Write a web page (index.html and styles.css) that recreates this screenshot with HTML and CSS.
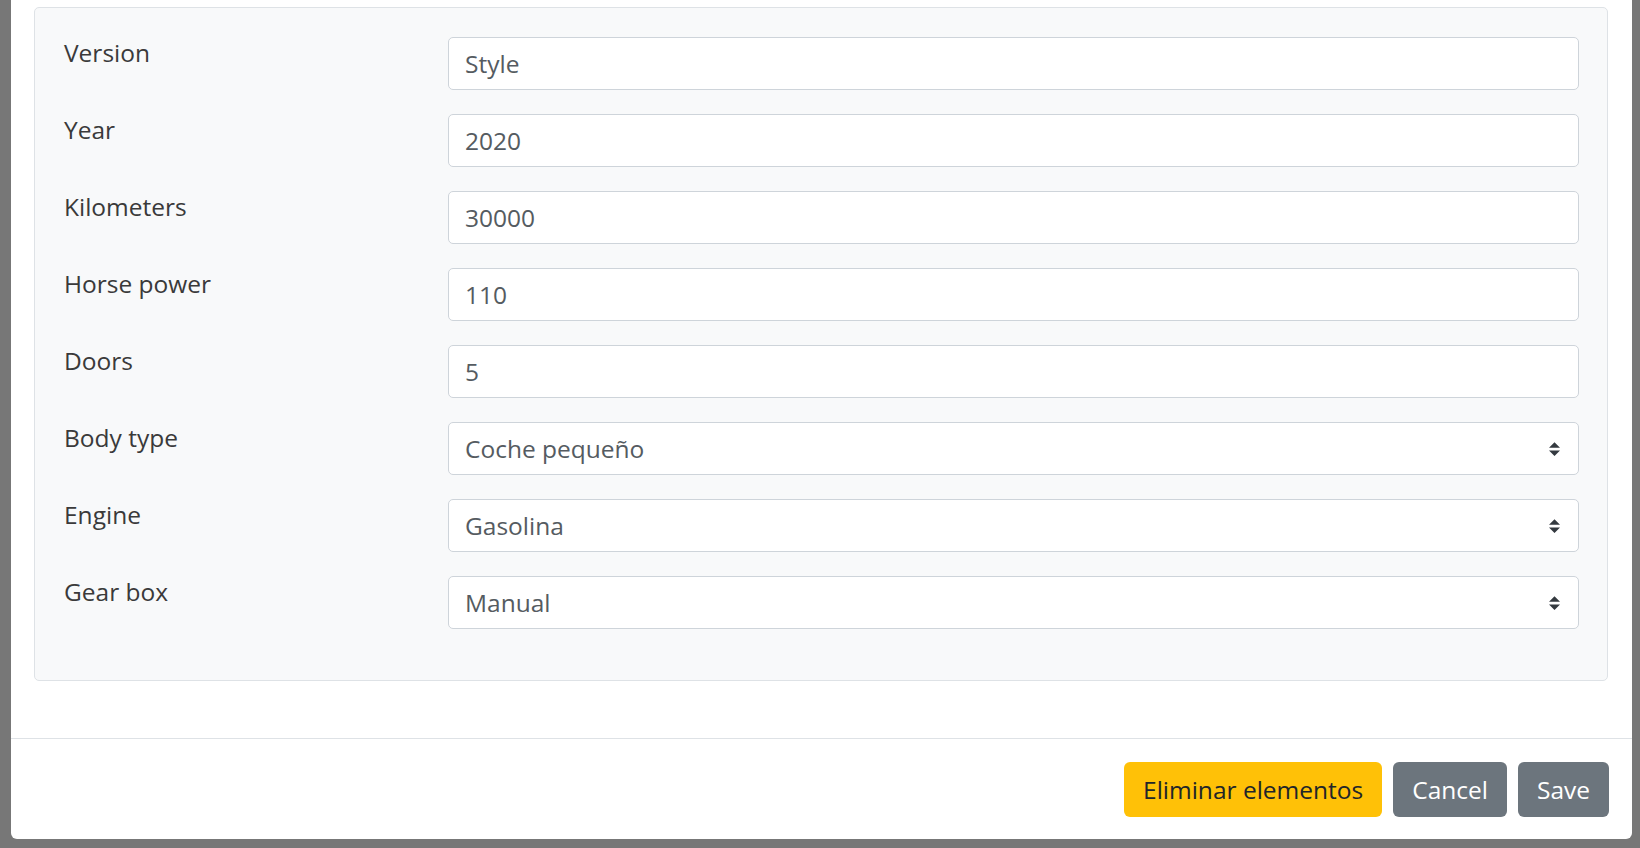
FILE: index.html
```html
<!DOCTYPE html>
<html lang="en">
<head>
<meta charset="UTF-8" />
<meta name="viewport" content="width=device-width, initial-scale=1" />
<title>Edit vehicle</title>
<link rel="stylesheet" href="styles.css">
</head>
<body>
<div class="modal">
  <div class="modal-body">
    <form class="panel">
      <div class="field">
        <label for="version">Version</label>
        <input id="version" class="form-control" type="text" value="Style" />
      </div>
      <div class="field">
        <label for="year">Year</label>
        <input id="year" class="form-control" type="text" value="2020" />
      </div>
      <div class="field">
        <label for="km">Kilometers</label>
        <input id="km" class="form-control" type="text" value="30000" />
      </div>
      <div class="field">
        <label for="hp">Horse power</label>
        <input id="hp" class="form-control" type="text" value="110" />
      </div>
      <div class="field">
        <label for="doors">Doors</label>
        <input id="doors" class="form-control" type="text" value="5" />
      </div>
      <div class="field">
        <label for="body">Body type</label>
        <div class="select-wrap">
          <select id="body" class="form-control">
            <option>Coche pequeño</option>
          </select>
          <svg class="caret" viewBox="0 0 4 5" width="11" height="14"><path d="M2 0L0 2h4zm0 5L0 3h4z" fill="#343a40"/></svg>
        </div>
      </div>
      <div class="field">
        <label for="engine">Engine</label>
        <div class="select-wrap">
          <select id="engine" class="form-control">
            <option>Gasolina</option>
          </select>
          <svg class="caret" viewBox="0 0 4 5" width="11" height="14"><path d="M2 0L0 2h4zm0 5L0 3h4z" fill="#343a40"/></svg>
        </div>
      </div>
      <div class="field">
        <label for="gear">Gear box</label>
        <div class="select-wrap">
          <select id="gear" class="form-control">
            <option>Manual</option>
          </select>
          <svg class="caret" viewBox="0 0 4 5" width="11" height="14"><path d="M2 0L0 2h4zm0 5L0 3h4z" fill="#343a40"/></svg>
        </div>
      </div>
    </form>
  </div>
  <div class="modal-footer">
    <button class="btn btn-warning" type="button">Eliminar elementos</button>
    <button class="btn btn-secondary" type="button">Cancel</button>
    <button class="btn btn-secondary" type="button">Save</button>
  </div>
</div>
</body>
</html>
```

FILE: styles.css
```css
html, body {
  margin: 0;
  height: 848px;
  overflow: hidden;
}
body {
  background-color: #777;
  font-family: "Open Sans", Arial, sans-serif;
  font-size: 24.5px;
  color: #3a3a3a;
  padding-left: 11px;
}
.modal {
  width: 1621px;
  height: 839px;
  box-sizing: border-box;
  background-color: #fff;
  border-radius: 0 0 6px 6px;
  display: flex;
  flex-direction: column;
}
.modal-body {
  padding: 7px 24px 0 23px;
  height: 738px;
  box-sizing: border-box;
}
.panel {
  background-color: #f8f9fa;
  border: 1px solid #dee2e6;
  border-radius: 5px;
  padding: 29px 28px 27px 29px;
  margin: 0;
}
.field {
  display: grid;
  grid-template-columns: 384px 1fr;
  margin-bottom: 24px;
  align-items: start;
}
.field label {
  line-height: 1.3;
}
.form-control {
  display: block;
  width: 100%;
  height: 53px;
  box-sizing: border-box;
  padding: 0 16px;
  border: 1px solid #ced4da;
  border-radius: 5px;
  background-color: #fff;
  font-family: inherit;
  font-size: 24.5px;
  color: #555b61;
  margin: 0;
}
select.form-control {
  appearance: none;
  -webkit-appearance: none;
  padding-right: 48px;
}
.select-wrap {
  position: relative;
}
.caret {
  position: absolute;
  right: 19px;
  top: 20px;
  pointer-events: none;
}
.modal-footer {
  border-top: 1px solid #dee2e6;
  display: flex;
  justify-content: flex-end;
  align-items: center;
  gap: 11px;
  padding: 23px 23px 22px 0;
}
.btn {
  height: 55px;
  padding: 0 19px;
  border: none;
  border-radius: 6px;
  font-family: inherit;
  font-size: 24.5px;
  cursor: pointer;
}
.btn-warning {
  background-color: #ffc107;
  color: #212529;
}
.btn-secondary {
  background-color: #6c757d;
  color: #fff;
}
```
